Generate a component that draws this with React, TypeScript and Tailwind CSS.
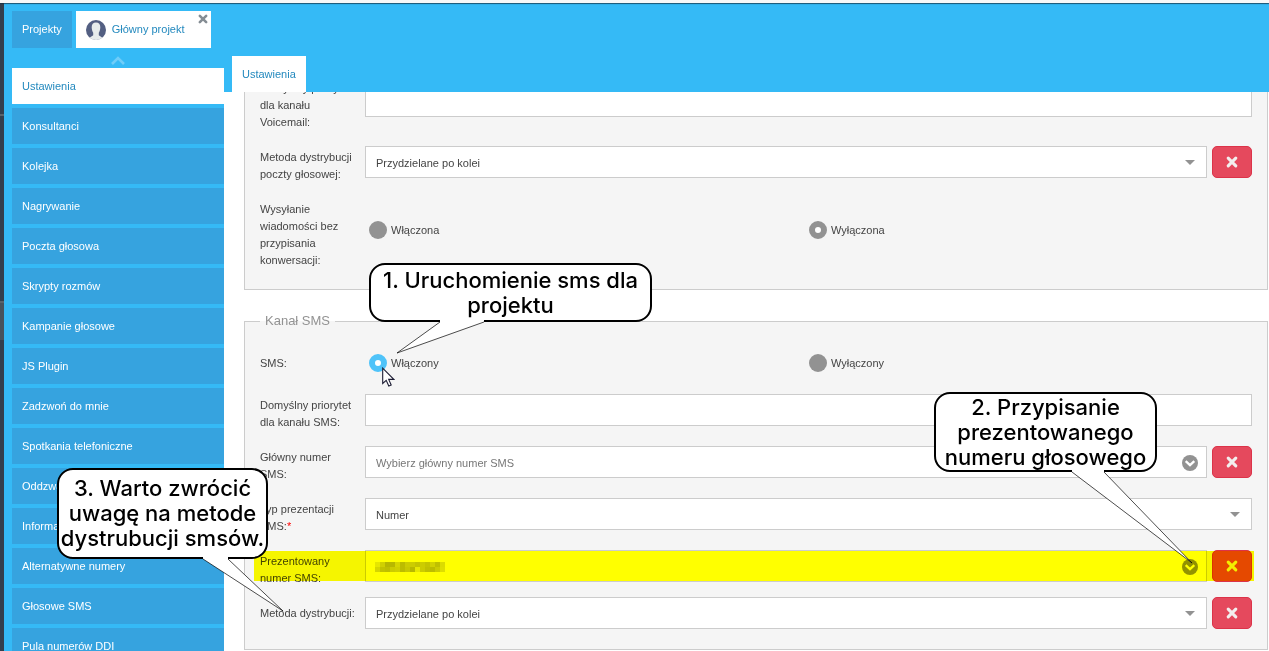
import React, { useState } from "react";

const menuItems = [
  "Ustawienia",
  "Konsultanci",
  "Kolejka",
  "Nagrywanie",
  "Poczta głosowa",
  "Skrypty rozmów",
  "Kampanie głosowe",
  "JS Plugin",
  "Zadzwoń do mnie",
  "Spotkania telefoniczne",
  "Oddzwanianie",
  "Informacje",
  "Alternatywne numery",
  "Głosowe SMS",
  "Pula numerów DDI",
];

const fieldClass =
  "block h-8 w-full min-w-0 appearance-none rounded-none border border-[#cccccc] bg-white px-2.5 pt-0.5 text-[11px] text-[#444444] placeholder:text-[#777777] outline-none";

function CrossIcon({ className }: { className: string }) {
  return (
    <svg viewBox="0 0 12 12" className={className} aria-hidden="true">
      <path
        d="M2.2 2.2L9.8 9.8M9.8 2.2L2.2 9.8"
        fill="none"
        stroke="currentColor"
        strokeWidth="3.1"
        strokeLinecap="round"
      />
    </svg>
  );
}

function RemoveButton({ label }: { label: string }) {
  return (
    <button
      type="button"
      aria-label={label}
      className="ml-[5px] flex h-8 w-10 shrink-0 items-center justify-center rounded-[5px] border border-[#dc3349] bg-[#e5495d] text-[#f3eeee]"
    >
      <CrossIcon className="size-3" />
    </button>
  );
}

function Row({
  id,
  lines,
  required,
  highlighted,
  children,
}: {
  id: string;
  lines: string[];
  required?: boolean;
  highlighted?: boolean;
  children: React.ReactNode;
}) {
  const pad = lines.length > 1 ? "pt-[3px]" : "pt-2";
  return (
    <div className={`relative flex items-start ${highlighted ? "h-8" : ""}`}>
      <label htmlFor={id} className={`w-[105px] shrink-0 leading-[17px] ${pad}`}>
        {lines.map((line, i) => (
          <span key={line} className="block whitespace-nowrap">
            {line}
            {required && i === lines.length - 1 && <span className="text-[#ff0000]">*</span>}
          </span>
        ))}
      </label>
      {children}
      {highlighted && (
        <div className="pointer-events-none absolute top-px -right-0.5 -left-1.5 h-[30px] bg-[#ffff00] mix-blend-multiply" />
      )}
    </div>
  );
}

function SelectField({ id, value }: { id: string; value: string }) {
  return (
    <div className="relative min-w-0 flex-1">
      <select id={id} defaultValue={value} className={fieldClass}>
        <option>{value}</option>
      </select>
      <svg
        viewBox="0 0 10 5"
        className="pointer-events-none absolute top-3.5 right-3 h-[5px] w-2.5"
        aria-hidden="true"
      >
        <path d="M0 0H10L5 5Z" fill="#929292" />
      </svg>
    </div>
  );
}

function PickerField({ id, placeholder, children }: { id: string; placeholder?: string; children?: React.ReactNode }) {
  return (
    <div className="relative min-w-0 flex-1">
      <input id={id} type="text" placeholder={placeholder} className={fieldClass} />
      {children}
      <svg
        viewBox="0 0 16 16"
        className="pointer-events-none absolute top-[9px] right-[9px] size-4"
        aria-hidden="true"
      >
        <circle cx="8" cy="8" r="8" fill="#929292" />
        <path d="M3.7 6.2L8 10.2L12.3 6.2" fill="none" stroke="#ffffff" strokeWidth="2.3" />
      </svg>
    </div>
  );
}

function RadioPair({
  id,
  labels,
  initial,
  accent,
  height,
}: {
  id: string;
  labels: string[];
  initial: number;
  accent?: boolean;
  height: string;
}) {
  const [selected, setSelected] = useState(initial);
  return (
    <div className={`grid min-w-0 flex-1 grid-cols-2 items-center pr-[7px] ${height}`}>
      {labels.map((label, i) => (
        <label key={label} className="flex items-center gap-1 pl-1">
          <input
            id={i === 0 ? id : undefined}
            type="radio"
            name={id}
            checked={selected === i}
            onChange={() => setSelected(i)}
            className={`size-[18px] appearance-none rounded-full ${
              selected === i
                ? accent
                  ? "border-[6px] border-[#4fc3f9] bg-white"
                  : "border-[6px] border-[#929292] bg-white"
                : "bg-[#929292]"
            }`}
          />
          {label}
        </label>
      ))}
    </div>
  );
}

const maskRows = [
  ["#e6e600", "#d0d000", "#b6b600", "#b8b800", "#d6d600", "#bcbc00", "#cccc00", "#cccc00", "#c4c400", "#cccc00", "#c4c400", "#d2d200", "#c0c000", "#dcdc00"],
  ["#d6d600", "#c2c200", "#bebe00", "#cccc00", "#d0d000", "#bcbc00", "#c8c800", "#b8b800", "#e8e800", "#cccc00", "#c0c000", "#bcbc00", "#cccc00", "#dede00"],
];

function MaskedNumber() {
  return (
    <svg
      viewBox="0 0 70 10"
      className="pointer-events-none absolute top-3 left-2.5 h-2.5 w-[70px]"
      shapeRendering="crispEdges"
      aria-hidden="true"
    >
      {maskRows.map((cells, y) =>
        cells.map((fill, x) => <rect key={`${x}-${y}`} x={x * 5} y={y * 5} width="5" height="5" fill={fill} />),
      )}
    </svg>
  );
}

function Bubble({ lines, className, children }: { lines: string[]; className: string; children: React.ReactNode }) {
  return (
    <div
      className={`absolute flex flex-col items-center justify-center rounded-2xl border-2 border-black bg-white font-['Inter','Liberation_Sans',sans-serif] text-[22px] leading-[25px] font-medium whitespace-nowrap text-black ${className}`}
    >
      {lines.map((line) => (
        <span key={line}>{line}</span>
      ))}
      {children}
    </div>
  );
}

export default function App() {
  return (
    <div className="relative flex h-screen flex-col overflow-hidden bg-white font-['Liberation_Sans',Arial,sans-serif] text-[11px] text-[#444444]">
      <div className="z-10 h-[3px] shrink-0 bg-[#f8f8f8] shadow-[0_1px_1px_rgba(20,50,70,0.75)]" />
      <div className="flex min-h-0 flex-1">
        <div className="flex w-1 shrink-0 flex-col bg-[#333f4d]">
          <div className="h-[113px] border-b-2 border-[#5b646b]" />
          <div className="h-[187px] border-b-2 border-[#5b646b]" />
          <div className="h-[37px] bg-[#47535d]" />
        </div>
        <div className="flex min-w-0 flex-1 flex-col bg-[#35baf6]">
          <nav aria-label="Projekty" className="flex shrink-0 gap-1 px-2 pt-2">
            <a href="#projekty" className="flex h-[37px] items-center bg-[#36a3df] px-2.5 text-white">
              Projekty
            </a>
            <div className="relative flex h-[37px] w-[135px] items-center bg-white">
              <a href="#projekt" className="flex items-center gap-1.5 pl-2.5 text-[#2389be]">
                <svg viewBox="0 0 20 20" className="size-5" aria-hidden="true">
                  <circle cx="10" cy="10" r="10" fill="#535f82" />
                  <path
                    d="M10 2.6C7 2.600 5.600 4.700 5.700 7.600C5.800 9.800 6.400 11.600 7.200 12.800V15.200C6.600 16 5 16.400 3.700 17.700A10 10 0 0 0 16.300 17.700C15 16.400 13.400 16 12.800 15.200V12.800C13.600 11.600 14.200 9.800 14.300 7.600C14.400 4.700 13 2.600 10 2.600Z"
                    fill="#e7ecec"
                  />
                </svg>
                Główny projekt
              </a>
              <button type="button" aria-label="Zamknij" className="absolute top-[3px] right-[3px] text-[#858d94]">
                <CrossIcon className="size-2.5" />
              </button>
            </div>
          </nav>
          <div className="flex min-h-0 flex-1">
            <aside className="flex w-[220px] shrink-0 flex-col pl-2">
              <div className="flex h-5 w-[212px] shrink-0 items-center justify-center pt-1">
                <svg viewBox="0 0 14 9" className="h-[9px] w-3.5" aria-hidden="true">
                  <path d="M1 8L7 2L13 8" fill="none" stroke="#6fcdf9" strokeWidth="2.6" />
                </svg>
              </div>
              <nav aria-label="Menu" className="flex flex-col gap-1">
                {menuItems.map((item, i) => (
                  <a
                    key={item}
                    href={`#menu-${i}`}
                    className={`flex h-9 shrink-0 items-center px-2.5 ${
                      i === 0 ? "bg-white text-[#2389be]" : "bg-[#36a3df] text-white"
                    }`}
                  >
                    {item}
                  </a>
                ))}
              </nav>
            </aside>
            <main className="flex min-w-0 flex-1 flex-col">
              <div className="flex shrink-0 pt-2 pl-2">
                <a href="#ustawienia" className="flex h-9 items-center bg-white px-2.5 text-[#2389be]">
                  Ustawienia
                </a>
              </div>
              <div className="min-h-0 flex-1 overflow-hidden bg-white pr-px pl-5">
                <form className="-mt-9">
                  <fieldset className="flex min-w-0 flex-col gap-[15px] border border-[#cccccc] bg-[#f5f5f5] px-[15px] py-5">
                    <Row id="voicemail-priority" lines={["Domyślny priorytet", "dla kanału", "Voicemail:"]}>
                      <div className="min-w-0 flex-1 pt-2">
                        <input id="voicemail-priority" type="text" className={fieldClass} />
                      </div>
                    </Row>
                    <Row id="voicemail-method" lines={["Metoda dystrybucji", "poczty głosowej:"]}>
                      <SelectField id="voicemail-method" value="Przydzielane po kolei" />
                      <RemoveButton label="Usuń metodę dystrybucji poczty głosowej" />
                    </Row>
                    <Row
                      id="send-unassigned"
                      lines={["Wysyłanie", "wiadomości bez", "przypisania", "konwersacji:"]}
                    >
                      <RadioPair id="send-unassigned" labels={["Włączona", "Wyłączona"]} initial={1} height="h-16" />
                    </Row>
                  </fieldset>
                  <fieldset className="mt-[21px] min-w-0 border border-[#cccccc] bg-[#f5f5f5] px-[15px] pb-5">
                    <legend className="h-5 px-[5px] text-[13px] leading-5 text-[#929292]">Kanał SMS</legend>
                    <div className="flex flex-col gap-[15px] pt-4">
                      <Row id="sms" lines={["SMS:"]}>
                        <RadioPair id="sms" labels={["Włączony", "Wyłączony"]} initial={0} accent height="h-8" />
                      </Row>
                      <Row id="sms-priority" lines={["Domyślny priorytet", "dla kanału SMS:"]}>
                        <input id="sms-priority" type="text" className={fieldClass} />
                      </Row>
                      <Row id="sms-number" lines={["Główny numer", "SMS:"]}>
                        <PickerField id="sms-number" placeholder="Wybierz główny numer SMS" />
                        <RemoveButton label="Usuń główny numer SMS" />
                      </Row>
                      <Row id="sms-type" lines={["Typ prezentacji", "SMS:"]} required>
                        <SelectField id="sms-type" value="Numer" />
                      </Row>
                      <Row id="sms-presented" lines={["Prezentowany", "numer SMS:"]} highlighted>
                        <PickerField id="sms-presented">
                          <MaskedNumber />
                        </PickerField>
                        <RemoveButton label="Usuń prezentowany numer SMS" />
                      </Row>
                      <Row id="sms-method" lines={["Metoda dystrybucji:"]}>
                        <SelectField id="sms-method" value="Przydzielane po kolei" />
                        <RemoveButton label="Usuń metodę dystrybucji" />
                      </Row>
                    </div>
                  </fieldset>
                </form>
              </div>
            </main>
          </div>
        </div>
      </div>

      <div className="pointer-events-none absolute inset-0 z-20">
        <Bubble
          lines={["1. Uruchomienie sms dla", "projektu"]}
          className="top-[263px] left-[369px] h-[59px] w-[283px]"
        >
          <svg viewBox="0 0 90 34" className="absolute top-[55px] left-6 h-[34px] w-[90px]" aria-hidden="true">
            <path d="M45 0V2L2 33L89 2V0Z" fill="#ffffff" />
            <path d="M45 2L2 33L89 2" fill="none" stroke="#000000" strokeWidth="0.7" />
          </svg>
        </Bubble>
        <Bubble
          lines={["2. Przypisanie", "prezentowanego", "numeru głosowego"]}
          className="top-[392px] right-[112px] h-20 w-[223px]"
        >
          <svg viewBox="0 0 124 96" className="absolute top-[76px] left-[135px] h-24 w-[124px]" aria-hidden="true">
            <path d="M1 0V2L121 93L33 2V0Z" fill="#ffffff" />
            <path d="M1 2L121 93L33 2" fill="none" stroke="#000000" strokeWidth="0.7" />
          </svg>
        </Bubble>
        <Bubble
          lines={["3. Warto zwrócić", "uwagę na metode", "dystrubucji smsów."]}
          className="top-[468px] left-[57px] h-[91px] w-[211px]"
        >
          <svg viewBox="0 0 84 58" className="absolute top-[87px] left-[143px] h-[58px] w-[84px]" aria-hidden="true">
            <path d="M1 0V2L81 54L26 2V0Z" fill="#ffffff" />
            <path d="M1 2L81 54L26 2" fill="none" stroke="#000000" strokeWidth="0.7" />
          </svg>
        </Bubble>
        <svg viewBox="0 0 13 20" className="absolute top-[367px] left-[382px] h-5 w-[13px]" aria-hidden="true">
          <path d="M0.700 1.200V16.500L4.200 13.300L6.800 19L9.200 18L6.700 12.400H11.800Z" fill="#ffffff" stroke="#1c1c33" strokeWidth="1.1" />
        </svg>
      </div>
    </div>
  );
}
